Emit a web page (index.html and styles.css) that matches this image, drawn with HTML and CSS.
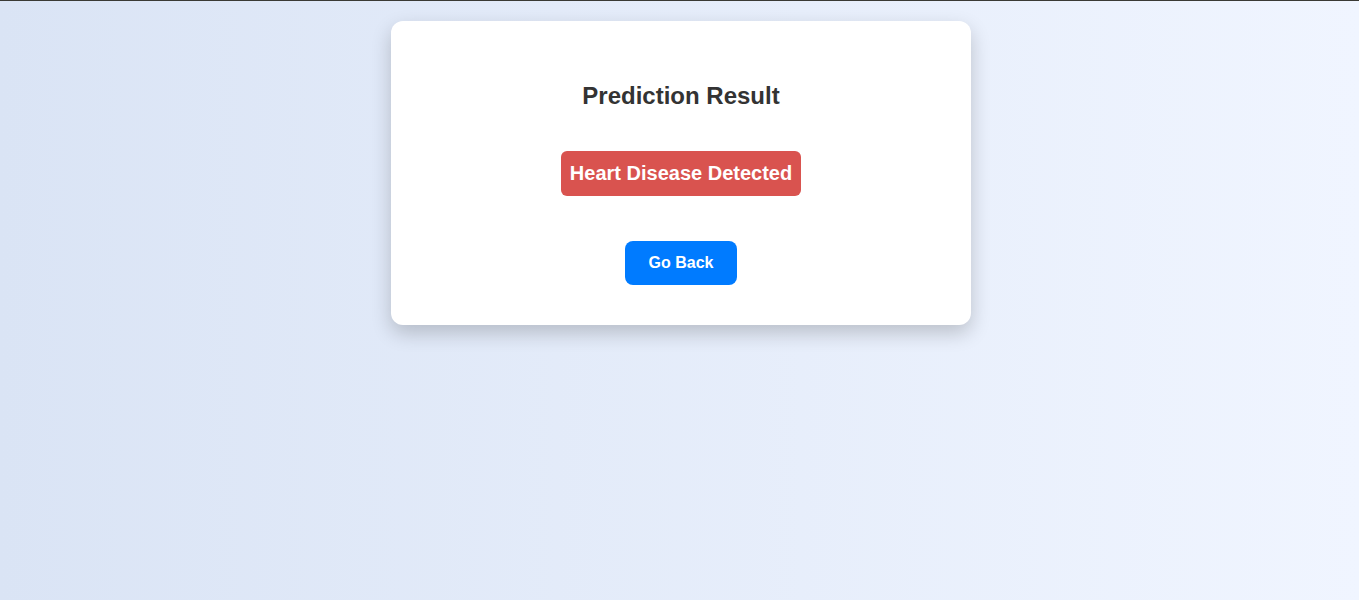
FILE: index.html
```html
<!DOCTYPE html>
<html>
<head>
<meta charset="utf-8">
<link rel="stylesheet" href="styles.css">
</head>
<body>
<div class="topline"></div>
<main class="page">
  <section class="card">
    <h2 class="title">Prediction Result</h2>
    <div class="result">Heart Disease Detected</div>
    <a class="btn" href="#">Go Back</a>
  </section>
</main>
</body>
</html>
```
FILE: styles.css
```css
html, body {
  margin: 0;
  padding: 0;
  height: 100%;
}
body {
  font-family: "Liberation Sans", Arial, sans-serif;
  background: linear-gradient(to right, #dae4f5, #f0f5ff);
  min-height: 600px;
}
.topline {
  height: 1px;
  background: #3a3a35;
}
.page {
  display: flex;
  justify-content: center;
  padding: 20px 0 0 3px;
}
.card {
  width: 580px;
  box-sizing: border-box;
  background: #fff;
  border-radius: 12px;
  box-shadow: 0 8px 20px rgba(0, 0, 0, 0.2);
  padding: 61px 0 40px;
  display: flex;
  flex-direction: column;
  align-items: center;
}
.title {
  margin: 0;
  font-size: 24px;
  line-height: 28px;
  font-weight: bold;
  color: #333;
}
.result {
  margin-top: 41px;
  background: #d9534f;
  color: #fff;
  font-size: 20px;
  font-weight: bold;
  line-height: 23px;
  padding: 11px 9px;
  border-radius: 6px;
}
.btn {
  margin-top: 45px;
  background: #007bff;
  color: #fff;
  font-size: 16px;
  font-weight: bold;
  line-height: 18px;
  padding: 13px 24px;
  border-radius: 8px;
  text-decoration: none;
}
```
